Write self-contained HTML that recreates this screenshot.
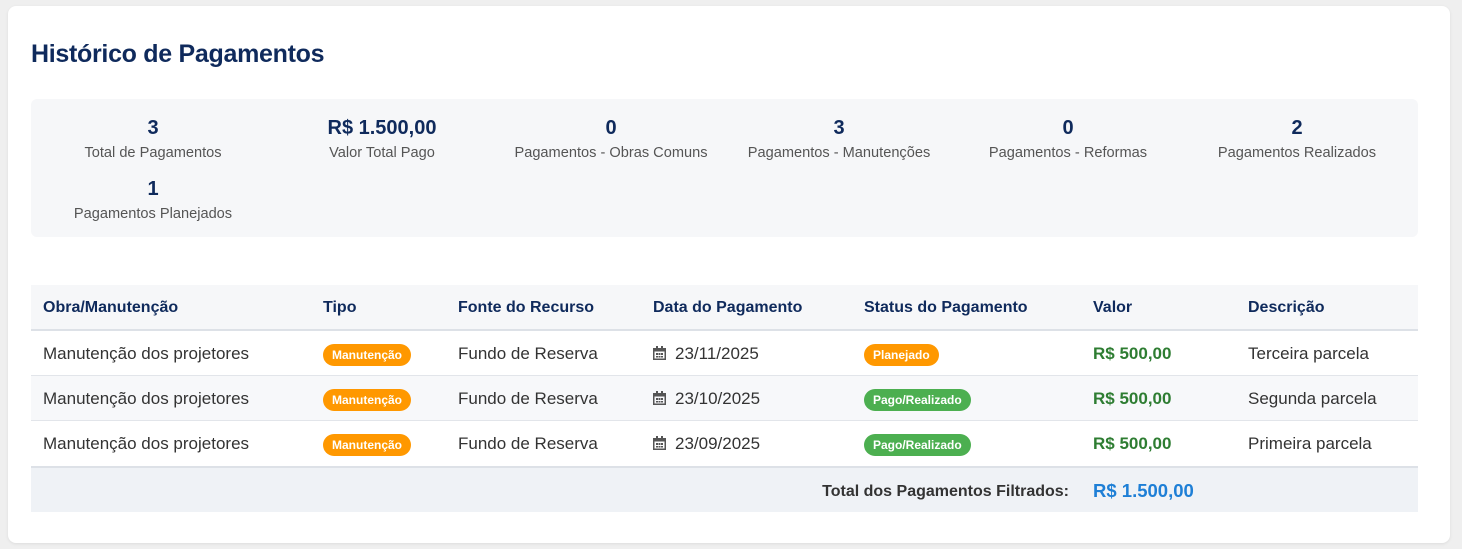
<!DOCTYPE html>
<html><head><meta charset="utf-8"><style>
*{box-sizing:border-box;margin:0;padding:0}
body{width:1462px;height:549px;background:#efefef;font-family:"Liberation Sans",sans-serif;position:relative;overflow:hidden}
.card{position:absolute;left:8px;top:6px;width:1442px;height:537px;background:#fff;border-radius:8px;box-shadow:0 1px 3px rgba(0,0,0,.08)}
h1{position:absolute;left:31px;top:40px;font-size:25px;font-weight:bold;color:#0f2a5c;letter-spacing:-0.3px}
.stats{position:absolute;left:31px;top:99px;width:1387px;height:138px;background:#f6f7f9;border-radius:6px}
.st{position:absolute;width:230px;margin-left:-115px;text-align:center}
.st b{display:block;font-size:20px;color:#0f2a5c;line-height:24px}
.st span{display:block;font-size:14.6px;color:#555;line-height:18px;margin-top:4px}
.tbl{position:absolute;left:31px;top:285px;width:1387px}
.row{position:relative;height:45px;border-bottom:1px solid #e2e5ea;font-size:17px;color:#333}
.row>div{position:absolute;top:0;line-height:45px;white-space:nowrap}
.hd{background:#f6f7f9;border-bottom:2px solid #dde1e7;height:46px;font-weight:bold;color:#0f2a5c;font-size:16px}
.alt{background:#f7f8fa}
.badge{display:inline-block;height:22px;line-height:22px;padding:0 9px;border-radius:11px;color:#fff;font-size:12px;font-weight:bold;vertical-align:middle}
.or{background:#ff9800}.gr{background:#4caf50}
.val{color:#2e7d32;font-weight:bold}
.foot{height:46px;background:#eff2f6;border-top:2px solid #dde1e7;position:relative}
.cal{display:inline-block;vertical-align:middle;margin-right:9px;margin-top:-4px}
</style></head><body>
<div class="card"></div>
<h1>Histórico de Pagamentos</h1>
<div class="stats">
<div class="st" style="left:122px;top:17px"><b>3</b><span>Total de Pagamentos</span></div>
<div class="st" style="left:351px;top:17px"><b>R$ 1.500,00</b><span>Valor Total Pago</span></div>
<div class="st" style="left:580px;top:17px"><b>0</b><span>Pagamentos - Obras Comuns</span></div>
<div class="st" style="left:808px;top:17px"><b>3</b><span>Pagamentos - Manutenções</span></div>
<div class="st" style="left:1037px;top:17px"><b>0</b><span>Pagamentos - Reformas</span></div>
<div class="st" style="left:1266px;top:17px"><b>2</b><span>Pagamentos Realizados</span></div>
<div class="st" style="left:122px;top:78px"><b>1</b><span>Pagamentos Planejados</span></div>
</div>
<div class="tbl">
<div class="row hd"><div style="left:12px">Obra/Manutenção</div><div style="left:292px">Tipo</div><div style="left:427px">Fonte do Recurso</div><div style="left:622px">Data do Pagamento</div><div style="left:833px">Status do Pagamento</div><div style="left:1062px">Valor</div><div style="left:1217px">Descrição</div></div>
<div class="row"><div style="left:12px">Manutenção dos projetores</div><div style="left:292px"><span class="badge or">Manutenção</span></div><div style="left:427px">Fundo de Reserva</div><div style="left:622px"><svg class="cal" width="13" height="14" viewBox="0 0 13 14"><rect x="3" y="0" width="2" height="3" fill="#555"/><rect x="8" y="0" width="2" height="3" fill="#555"/><path d="M0 2h13v12H0z M1.5 5.5v7h10v-7z M3 7h2v2H3zM5.5 7h2v2h-2zM8 7h2v2H8zM3 10h2v1.5H3zM5.5 10h2v1.5h-2zM8 10h2v1.5H8z" fill="#555" fill-rule="evenodd"/></svg>23/11/2025</div><div style="left:833px"><span class="badge or">Planejado</span></div><div class="val" style="left:1062px">R$ 500,00</div><div style="left:1217px">Terceira parcela</div></div>
<div class="row alt"><div style="left:12px">Manutenção dos projetores</div><div style="left:292px"><span class="badge or">Manutenção</span></div><div style="left:427px">Fundo de Reserva</div><div style="left:622px"><svg class="cal" width="13" height="14" viewBox="0 0 13 14"><rect x="3" y="0" width="2" height="3" fill="#555"/><rect x="8" y="0" width="2" height="3" fill="#555"/><path d="M0 2h13v12H0z M1.5 5.5v7h10v-7z M3 7h2v2H3zM5.5 7h2v2h-2zM8 7h2v2H8zM3 10h2v1.5H3zM5.5 10h2v1.5h-2zM8 10h2v1.5H8z" fill="#555" fill-rule="evenodd"/></svg>23/10/2025</div><div style="left:833px"><span class="badge gr">Pago/Realizado</span></div><div class="val" style="left:1062px">R$ 500,00</div><div style="left:1217px">Segunda parcela</div></div>
<div class="row" style="border-bottom:none"><div style="left:12px">Manutenção dos projetores</div><div style="left:292px"><span class="badge or">Manutenção</span></div><div style="left:427px">Fundo de Reserva</div><div style="left:622px"><svg class="cal" width="13" height="14" viewBox="0 0 13 14"><rect x="3" y="0" width="2" height="3" fill="#555"/><rect x="8" y="0" width="2" height="3" fill="#555"/><path d="M0 2h13v12H0z M1.5 5.5v7h10v-7z M3 7h2v2H3zM5.5 7h2v2h-2zM8 7h2v2H8zM3 10h2v1.5H3zM5.5 10h2v1.5h-2zM8 10h2v1.5H8z" fill="#555" fill-rule="evenodd"/></svg>23/09/2025</div><div style="left:833px"><span class="badge gr">Pago/Realizado</span></div><div class="val" style="left:1062px">R$ 500,00</div><div style="left:1217px">Primeira parcela</div></div>
<div class="foot"><div style="position:absolute;right:349px;top:1px;line-height:46px;font-weight:bold;font-size:16px;color:#333">Total dos Pagamentos Filtrados:</div><div style="position:absolute;left:1062px;top:0;line-height:46px;font-weight:bold;font-size:18.5px;color:#1e7fd6">R$ 1.500,00</div></div>
</div>
</body></html>
